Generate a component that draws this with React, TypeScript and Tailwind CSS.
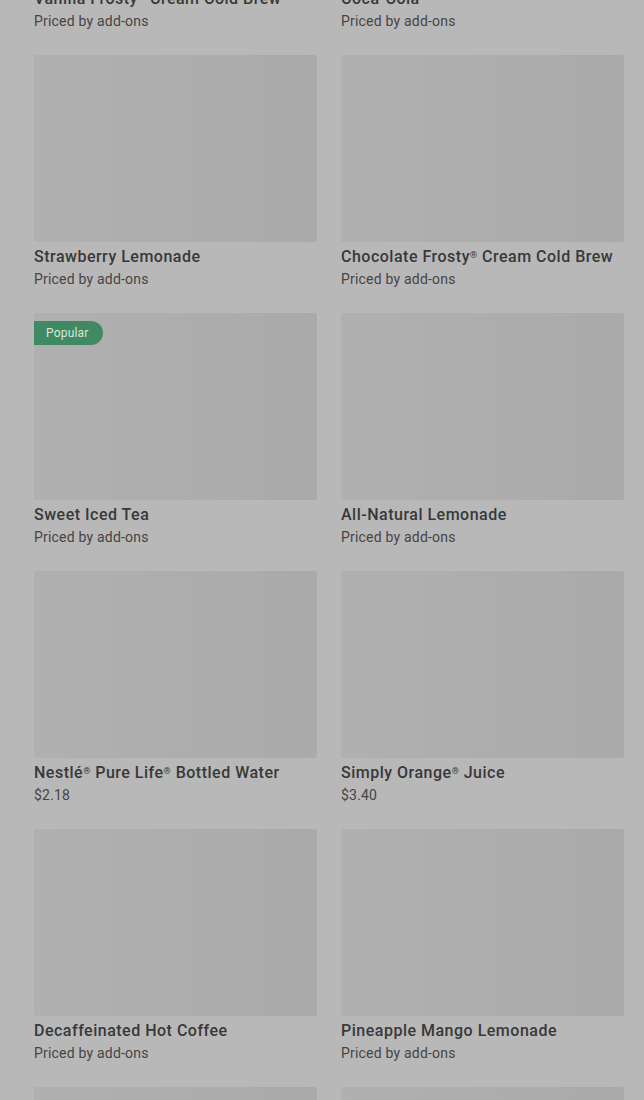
import React from "react";

interface MenuItem {
  name: React.ReactNode;
  price: string;
  popular?: boolean;
}

const R = () => <span className="relative -top-[4px] text-[9px] leading-none">®</span>;

const items: MenuItem[] = [
  { name: <>Vanilla Frosty<R /> Cream Cold Brew</>, price: "Priced by add-ons" },
  { name: "Coca-Cola", price: "Priced by add-ons" },
  { name: "Strawberry Lemonade", price: "Priced by add-ons" },
  { name: <>Chocolate Frosty<R /> Cream Cold Brew</>, price: "Priced by add-ons" },
  { name: "Sweet Iced Tea", price: "Priced by add-ons", popular: true },
  { name: "All-Natural Lemonade", price: "Priced by add-ons" },
  { name: <>Nestlé<R /> Pure Life<R /> Bottled Water</>, price: "$2.18" },
  { name: <>Simply Orange<R /> Juice</>, price: "$3.40" },
  { name: "Decaffeinated Hot Coffee", price: "Priced by add-ons" },
  { name: "Pineapple Mango Lemonade", price: "Priced by add-ons" },
  { name: "Hot Coffee", price: "Priced by add-ons" },
  { name: <>Dasani<R /> Water</>, price: "$2.18" },
];

function ItemCard({ item }: { item: MenuItem }) {
  return (
    <div className="flex flex-col">
      <div className="relative h-[187px] rounded-[2px] bg-gradient-to-r from-[#b0b0b0] to-[#aaaaaa]">
        {item.popular && (
          <span className="absolute left-0 top-2 flex h-6 items-center rounded-r-full bg-[#3f8a62] pl-3 pr-[14px] text-xs tracking-[0.2px] text-[#d8e6de]">
            Popular
          </span>
        )}
      </div>
      <p className="mt-[5px] truncate text-base font-medium leading-5 tracking-[0.5px] text-[#383838]">
        {item.name}
      </p>
      <p className="mt-[2px] text-sm leading-5 tracking-[0.2px] text-[#454545]">{item.price}</p>
    </div>
  );
}

export default function App() {
  return (
    <div className="h-[1100px] overflow-hidden bg-[#b8b8b8] font-['Roboto',sans-serif]">
      <div className="-mt-[203px] grid grid-cols-2 gap-x-6 gap-y-6 pl-[34px] pr-5">
        {items.map((item, idx) => (
          <ItemCard key={idx} item={item} />
        ))}
      </div>
    </div>
  );
}
